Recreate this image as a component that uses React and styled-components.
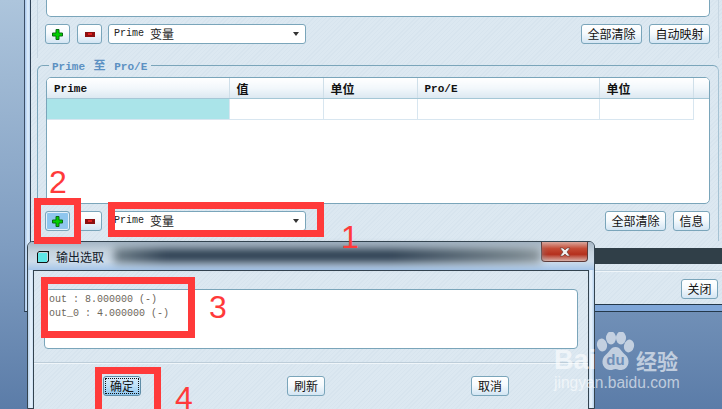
import React from "react"
import styled, { createGlobalStyle } from "styled-components"

const GlobalStyle = createGlobalStyle`
  html, body {
    margin: 0;
    padding: 0;
    background: #6a8ab2;
  }
  * {
    box-sizing: border-box;
  }
`

const cjk = `"Noto Sans CJK SC", "Liberation Sans", sans-serif`
const mono = `"Liberation Mono", "Noto Sans CJK SC", monospace`
const line = "#7aa5ba"
const hatch = `repeating-linear-gradient(135deg, #dce8f1 0, #dce8f1 2px, #d7e4ee 2px, #d7e4ee 3px)`

const Page = styled.div`
  position: relative;
  width: 722px;
  height: 409px;
  overflow: hidden;
  padding-left: 24px;
  background: linear-gradient(180deg, #adc5dc 0%, #7f9dc1 60%, #5b7ca8 100%);
`

const Window = styled.div`
  height: 312px;
  padding: 0 0 6px 5px;
  border-left: 1px solid #3d5068;
  border-bottom: 1px solid #24384a;
  background: linear-gradient(90deg, #a9c8ee, #dfeefb 50%, #a9c8ee) left top / 6px 100% no-repeat, #7fa6d8;
`

const Body = styled.div`
  height: 305px;
  border-left: 1px solid #2f4256;
  border-bottom: 1px solid #24384a;
  background: ${hatch};
`

const Panels = styled.div`
  height: 248px;
  padding: 0 3px 0 6px;
`

const TopPanel = styled.div`
  height: 58px;
  padding: 0 8px;
  border-left: 1px solid #c6d6e2;
  border-right: 1px solid #c6d6e2;
`

const TopBox = styled.div`
  height: 17px;
  background: #fff;
  border: 1px solid ${line};
  border-top: 0;
  border-radius: 0 0 5px 5px;
`

const Toolbar = styled.div`
  display: flex;
  align-items: stretch;
  gap: 7px;
  height: 20px;
  margin: ${(p) => p.$top}px 0 0 -1px;
`

const Spacer = styled.div`
  flex: 1;
`

const Button = styled.button`
  width: ${(p) => p.$w}px;
  height: 20px;
  padding: 0;
  border: 1px solid ${(p) => (p.$focused ? "#5f8ca6" : line)};
  border-radius: 3px;
  background: ${(p) =>
    p.$pressed
      ? "#8fc6ee"
      : p.$focused
        ? "linear-gradient(180deg, #d8ecfb 0%, #bfe0f8 50%, #8cc6f0 100%)"
        : "linear-gradient(180deg, #fff 0%, #f6fafd 45%, #d3e5f3 100%)"};
  box-shadow: ${(p) => (p.$pressed ? "inset 0 0 0 1px #e4f1fa" : "none")};
  color: #111;
  font: 12px/18px ${cjk};
  display: flex;
  align-items: center;
  justify-content: center;
`

const FocusLabel = styled.span`
  width: 32px;
  height: 14px;
  outline: 1px dotted #111;
  text-align: center;
  line-height: 14px;
`

const Select = styled.div`
  display: flex;
  align-items: center;
  width: 198px;
  margin-left: -1px;
  padding: 0 5px;
  background: #fff;
  border: 1px solid ${line};
  border-radius: 3px;
  color: #222;
  font: 10px/18px ${mono};
`

const SelectCjk = styled.span`
  margin-left: 6px;
  font: 12px/18px ${cjk};
`

const Caret = styled.span`
  margin-left: auto;
  margin-right: 1px;
  width: 0;
  height: 0;
  border-left: 3px solid transparent;
  border-right: 3px solid transparent;
  border-top: 4px solid #333;
`

const FieldSet = styled.fieldset`
  height: 183px;
  margin: 0;
  padding: 5px 8px 0;
  border: 1px solid ${line};
  border-right-color: #a5c2d3;
  border-bottom: 0;
  border-radius: 6px 6px 0 0;
  min-width: 0;
`

const Legend = styled.legend`
  margin-left: 3px;
  padding: 0 4px 0 3px;
  height: 14px;
  color: #5b90c2;
  font: bold 11px/14px ${mono};
`

const LegendCjk = styled.span`
  margin: 0 2px;
  font: bold 12px/14px ${cjk};
`

const TableBox = styled.div`
  height: 127px;
  background: #fff;
  border: 1px solid ${line};
  border-radius: 5px;
  overflow: hidden;
`

const Table = styled.table`
  width: 662px;
  table-layout: fixed;
  border-collapse: collapse;
`

const Head = styled.th`
  width: ${(p) => p.$w}px;
  height: 20px;
  padding: 2px 0 0 7px;
  text-align: left;
  background: linear-gradient(180deg, #fff 0%, #f2f7fb 50%, #dce8f1 100%);
  border-right: 1px solid #cfdfe9;
  border-bottom: 1px solid #a5c7d6;
  color: #111;
  font: bold ${(p) => (p.$cjk ? "12px" : "11px")}/18px ${(p) => (p.$cjk ? cjk : mono)};
`

const FillerHead = styled.th`
  background: linear-gradient(180deg, #fff 0%, #f2f7fb 50%, #dce8f1 100%);
  border-bottom: 1px solid #a5c7d6;
`

const Cell = styled.td`
  height: 21px;
  padding: 0;
  background: ${(p) => (p.$selected ? "#aae4e9" : "#fff")};
  border-right: 1px solid #d8e6f0;
  border-bottom: 1px solid #d8e6f0;
`

const DarkBar = styled.div`
  height: 16px;
  background: #303f48;
`

const Footer = styled.div`
  display: flex;
  justify-content: flex-end;
  height: 40px;
  margin-top: 6px;
  padding: 8px 4px 0 0;
  border-top: 1px solid #c3d3df;
  box-shadow: inset 0 1px 0 #f0f6fa;
`

const Dialog = styled.div`
  position: absolute;
  left: 27px;
  top: 241px;
  width: 568px;
  height: 168px;
  padding: 0 5px;
  border: 1px solid #33434f;
  border-radius: 6px 6px 0 0;
  background: linear-gradient(90deg, #b9d3ee, #eaf4fc 50%, #b9d3ee) right top / 6px 100% no-repeat,
    linear-gradient(90deg, #b9d3ee, #eaf4fc 50%, #b9d3ee) left top / 6px 100% no-repeat, #c4d8ea;
`

const TitleBar = styled.div`
  display: flex;
  align-items: flex-start;
  height: 28px;
  margin: 0 -5px;
  padding: 0 6px 0 8px;
  background: linear-gradient(180deg, #a6b7c6 0%, #c6d3de 35%, #cddcea 70%, #a6c6ea 100%);
  border-radius: 5px 5px 0 0;
`

const TitleIcon = styled.svg`
  flex: none;
  width: 14px;
  height: 14px;
  margin-top: 8px;
`

const TitleText = styled.span`
  flex: none;
  width: 56px;
  margin: 6px 0 0 6px;
  color: #14202a;
  font: 12px/18px ${cjk};
`

const TitleBlur = styled.div`
  flex: 1;
  height: 15px;
  margin: 6px 0 0 2px;
  background: linear-gradient(90deg, #6f7f89 0%, #2e4052 12%, #2e4052 65%, #76848c 95%, #8c979e 100%);
  filter: blur(4px);
`

const CloseButton = styled.div`
  flex: none;
  display: flex;
  align-items: center;
  justify-content: center;
  width: 47px;
  height: 20px;
  border: 1px solid #5e3a38;
  border-top: 0;
  border-radius: 0 0 4px 4px;
  background: linear-gradient(180deg, #d9a89e 0%, #c44a34 35%, #b5301d 65%, #d8b0a8 100%);
`

const DialogBody = styled.div`
  height: 139px;
  padding-top: 18px;
  border: 1px solid #33434f;
  border-bottom: 0;
  background: ${hatch};
`

const OutputBox = styled.div`
  height: 60px;
  margin: 0 10px;
  padding: 3px 4px;
  background: #fff;
  border: 1px solid ${line};
  border-radius: 4px;
  color: #6d675a;
  font: 10px/14px ${mono};
`

const DialogFooter = styled.div`
  display: flex;
  gap: 146px;
  margin-top: 13px;
  padding: 13px 0 0 69px;
  border-top: 1px solid #bdcdd9;
  box-shadow: inset 0 1px 0 #f0f6fa;
`

const RedBox = styled.div`
  position: absolute;
  left: ${(p) => p.$x}px;
  top: ${(p) => p.$y}px;
  width: ${(p) => p.$w}px;
  height: ${(p) => p.$h}px;
  border: 7px solid #ff3a3a;
`

const Digit = styled.span`
  position: absolute;
  left: ${(p) => p.$x}px;
  top: ${(p) => p.$y}px;
  color: #ff3a3a;
  font: 32px/22px "Liberation Sans", sans-serif;
`

const Watermark = styled.div`
  position: absolute;
  left: 554px;
  top: 332px;
  width: 130px;
  color: rgba(255, 255, 255, 0.6);
`

const MarkRow = styled.div`
  display: flex;
  align-items: flex-start;
  height: 40px;
`

const MarkBai = styled.span`
  width: 42px;
  margin-top: 15px;
  font: bold 27px/26px "Liberation Sans", sans-serif;
`

const MarkPaw = styled.svg`
  flex: none;
  width: 39px;
  height: 40px;
`

const MarkCjk = styled.span`
  margin: 16px 0 0 1px;
  white-space: nowrap;
  font: bold 21px/24px ${cjk};
`

const MarkUrl = styled.div`
  margin-top: 2px;
  white-space: nowrap;
  font: 15.6px/18px "Liberation Sans", sans-serif;
`

const PlusIcon = () => (
  <svg width="11" height="11" viewBox="0 0 11 11">
    <path d="M4 0.5h3v3.5h3.500v3H7v3.500H4V7H0.500V4H4z" fill="#00d000" stroke="#0a6a12" strokeWidth="1" />
  </svg>
)

const MinusIcon = () => (
  <svg width="10" height="5" viewBox="0 0 10 5">
    <rect x="0" y="0" width="10" height="5" fill="#8c1010" />
    <rect x="3" y="1" width="4" height="2" fill="#e02020" />
  </svg>
)

const CubeIcon = () => (
  <TitleIcon viewBox="0 0 14 14">
    <path d="M3 1h10v10l-2 2H1V3z" fill="#111" />
    <rect x="2" y="3" width="9" height="9" fill="#5fe6e6" />
    <path d="M3 2h9l-1 1H2zM12 2.500v8l-1 1V3z" fill="#c8d4d8" />
  </TitleIcon>
)

const CloseIcon = () => (
  <svg width="12" height="10" viewBox="0 0 12 10">
    <path d="M1 1h3l2 2 2-2h3L8 5l3 4H8L6 7 4 9H1l3-4z" fill="#f2f2f2" stroke="#5a3430" strokeWidth="0.600" />
  </svg>
)

const Paw = () => (
  <MarkPaw viewBox="0 0 39 40">
    <ellipse cx="6" cy="13" rx="5" ry="6.500" transform="rotate(-12 6 13)" fill="currentColor" />
    <ellipse cx="15" cy="6" rx="5" ry="6.500" fill="currentColor" />
    <ellipse cx="25" cy="6" rx="5" ry="6.500" fill="currentColor" />
    <ellipse cx="33" cy="14" rx="5" ry="6.500" transform="rotate(14 33 14)" fill="currentColor" />
    <path d="M19.500 15c5 0 6 5 10 8 5 4 4 14-4 15-3 .4-4-1-6-1s-3 1.400-6 1c-8-1-9-11-4-15 4-3 5-8 10-8z" fill="currentColor" />
    <text x="19.500" y="33" textAnchor="middle" fontFamily="Liberation Sans, sans-serif" fontWeight="bold" fontSize="15" fill="#6f8fb8">
      du
    </text>
  </MarkPaw>
)

const columns = [
  { label: "Prime", w: 182 },
  { label: "值", w: 94, cjk: true },
  { label: "单位", w: 94, cjk: true },
  { label: "Pro/E", w: 182 },
  { label: "单位", w: 94, cjk: true },
]

const VariableSelect = () => (
  <Select>
    Prime<SelectCjk>变量</SelectCjk>
    <Caret />
  </Select>
)

export default function App() {
  return (
    <>
      <GlobalStyle />
      <Page>
        <Window>
          <Body>
            <Panels>
              <TopPanel>
                <TopBox />
                <Toolbar $top={7}>
                  <Button $w={25}>
                    <PlusIcon />
                  </Button>
                  <Button $w={25}>
                    <MinusIcon />
                  </Button>
                  <VariableSelect />
                  <Spacer />
                  <Button $w={61}>全部清除</Button>
                  <Button $w={61}>自动映射</Button>
                </Toolbar>
              </TopPanel>
              <FieldSet>
                <Legend>
                  Prime <LegendCjk>至</LegendCjk> Pro/E
                </Legend>
                <TableBox>
                  <Table>
                    <thead>
                      <tr>
                        {columns.map((c, i) => (
                          <Head key={i} $w={c.w} $cjk={c.cjk}>
                            {c.label}
                          </Head>
                        ))}
                        <FillerHead />
                      </tr>
                    </thead>
                    <tbody>
                      <tr>
                        {columns.map((c, i) => (
                          <Cell key={i} $selected={i === 0} />
                        ))}
                      </tr>
                    </tbody>
                  </Table>
                </TableBox>
                <Toolbar $top={7}>
                  <Button $w={25} $pressed>
                    <PlusIcon />
                  </Button>
                  <Button $w={25}>
                    <MinusIcon />
                  </Button>
                  <VariableSelect />
                  <Spacer />
                  <Button $w={61}>全部清除</Button>
                  <Button $w={37}>信息</Button>
                </Toolbar>
              </FieldSet>
            </Panels>
            <DarkBar />
            <Footer>
              <Button $w={37}>关闭</Button>
            </Footer>
          </Body>
        </Window>

        <Dialog>
          <TitleBar>
            <CubeIcon />
            <TitleText>输出选取</TitleText>
            <TitleBlur />
            <CloseButton>
              <CloseIcon />
            </CloseButton>
          </TitleBar>
          <DialogBody>
            <OutputBox>
              out : 8.000000 (-)
              <br />
              out_0 : 4.000000 (-)
            </OutputBox>
            <DialogFooter>
              <Button $w={38} $focused>
                <FocusLabel>确定</FocusLabel>
              </Button>
              <Button $w={38}>刷新</Button>
              <Button $w={38}>取消</Button>
            </DialogFooter>
          </DialogBody>
        </Dialog>

        <RedBox $x={108} $y={202} $w={216} $h={35} />
        <RedBox $x={34} $y={198} $w={47} $h={46} />
        <RedBox $x={41} $y={277} $w={154} $h={61} />
        <RedBox $x={95} $y={367} $w={66} $h={50} />
        <Digit $x={49} $y={171}>2</Digit>
        <Digit $x={341} $y={226}>1</Digit>
        <Digit $x={209} $y={296}>3</Digit>
        <Digit $x={175} $y={387}>4</Digit>

        <Watermark>
          <MarkRow>
            <MarkBai>Bai</MarkBai>
            <Paw />
            <MarkCjk>经验</MarkCjk>
          </MarkRow>
          <MarkUrl>jingyan.baidu.com</MarkUrl>
        </Watermark>
      </Page>
    </>
  )
}
